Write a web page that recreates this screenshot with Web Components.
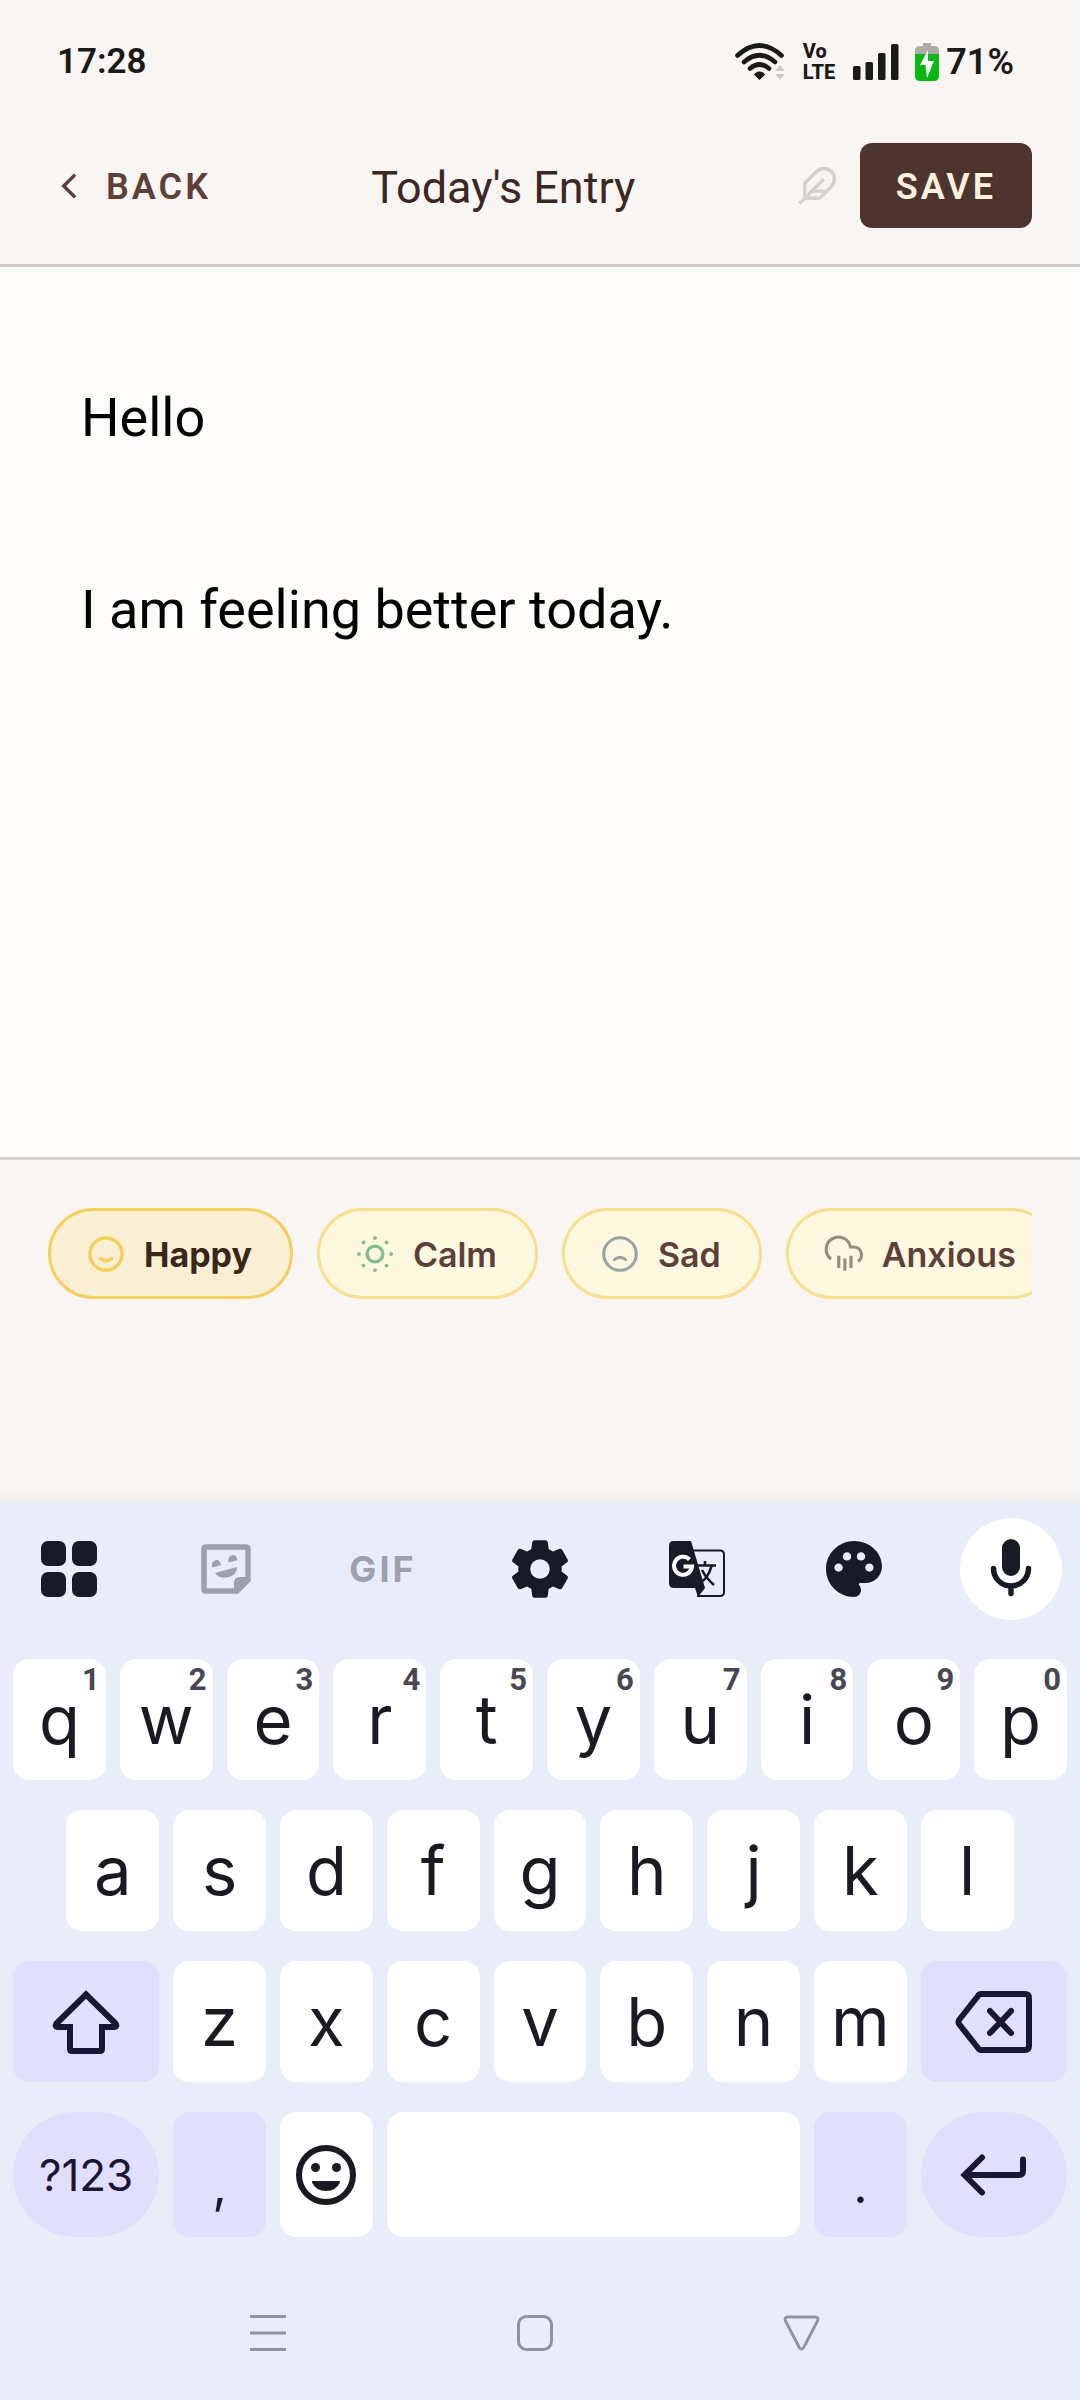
<!DOCTYPE html>
<html lang="en">
<head>
<meta charset="utf-8">
<meta name="viewport" content="width=device-width, initial-scale=1">
<title>Today's Entry</title>
<style>
    html, body {
        margin: 0;
        height: 100%;
    }
    body {
        font-family: Roboto, "Liberation Sans", sans-serif;
        --paper: #fdfcf8;
        --surface: #f9f5f2;
        --rule: #d7ccc8;
        --brown: #4e342e;
        --brown-light: #5d4037;
        --brown-dark: #3e2723;
        --board: #e9edf9;
        --key-alt: #e2dffc;
        --ink: #181a26;
    }
</style>
</head>
<body>
<journal-app></journal-app>

<template id="template-journal-app">
    <style>
        :host {
            display: flex;
            flex-direction: column;
            min-height: 100%;
            background: var(--surface);
        }
        entry-editor {
            flex: 1;
        }
    </style>
    <status-bar time="17:28" battery="71%"></status-bar>
    <entry-header>Today's Entry</entry-header>
    <entry-editor></entry-editor>
    <mood-bar>
        <mood-chip selected>
            <svg slot="icon" width="42" height="42" viewBox="0 0 24 24" fill="none" stroke="#f5cf5c" stroke-width="2" stroke-linecap="round">
                <circle cx="12" cy="12" r="9.2"/><path d="M8.8 14.6q3.2 2.4 6.4 0"/>
            </svg>
            Happy
        </mood-chip>
        <mood-chip>
            <svg slot="icon" width="42" height="42" viewBox="0 0 24 24" fill="#81c08a">
                <circle cx="12" cy="12" r="4.5" fill="none" stroke="#81c08a" stroke-width="1.9"/>
                <circle cx="12" cy="2.8" r="1.1"/><circle cx="12" cy="21.2" r="1.1"/>
                <circle cx="2.8" cy="12" r="1.1"/><circle cx="21.2" cy="12" r="1.1"/>
                <circle cx="5.4" cy="5.4" r="1.1"/><circle cx="18.6" cy="5.4" r="1.1"/>
                <circle cx="5.4" cy="18.6" r="1.1"/><circle cx="18.6" cy="18.6" r="1.1"/>
            </svg>
            Calm
        </mood-chip>
        <mood-chip>
            <svg slot="icon" width="42" height="42" viewBox="0 0 24 24" fill="none" stroke="#95a5a8" stroke-width="1.8" stroke-linecap="round">
                <circle cx="12" cy="12" r="9.3"/><path d="M8.8 15.2q3.2-2.6 6.4 0"/>
            </svg>
            Sad
        </mood-chip>
        <mood-chip>
            <svg slot="icon" width="42" height="42" viewBox="0 0 24 24" fill="none" stroke="#9b8b7c" stroke-width="1.8">
                <path d="M4.6 14.9A7 7 0 1 1 15.71 8h1.79a4.5 4.5 0 0 1 2.5 8.24M9 13v7M12.5 14.6v7M16 13v7"/>
            </svg>
            Anxious
        </mood-chip>
    </mood-bar>
    <soft-keyboard></soft-keyboard>
    <nav-bar></nav-bar>
</template>

<template id="template-status-bar">
    <style>
        :host {
            display: flex;
            justify-content: space-between;
            align-items: center;
            height: 91px;
            padding: 16px 66px 0 57px;
            font-size: 35px;
            font-weight: 600;
            color: #1a1a18;
        }
        .icons {
            display: flex;
            align-items: center;
        }
        .volte {
            display: grid;
            margin: 0 18px;
            font-size: 20px;
            font-weight: 800;
            line-height: 21px;
        }
        .battery {
            margin: 0 7px 0 16px;
        }
        .level {
            font-size: 36px;
        }
    </style>
    <span class="time"></span>
    <div class="icons">
        <svg width="50" height="38" viewBox="0 0 50 38" fill="none" stroke="#1a1a18" stroke-width="4.6" stroke-linecap="round">
            <path d="M2.5 12.5Q24.5-7.500 46.500 12.500M9 19q15.500-13.500 31 0M15 25.500q9.500-8 19 0"/>
            <path d="M24.500 28.500c3 0 5 2 5.500 3.300L24.500 37 19 31.800c.5-1.300 2.500-3.300 5.500-3.300z" fill="#1a1a18" stroke="none"/>
            <path d="M45 22l5 6H40zM45 37l5-6H40z" fill="#cfccc8" stroke="none"/>
        </svg>
        <span class="volte"><span>Vo</span><span>LTE</span></span>
        <svg width="46" height="38" viewBox="0 0 46 38" fill="#1a1a18">
            <rect x="0" y="23" width="7.500" height="14" rx="1.500"/>
            <rect x="12.500" y="19" width="7.500" height="18" rx="1.500"/>
            <rect x="25" y="10" width="7.500" height="27" rx="1.500"/>
            <rect x="38" y="1" width="7.500" height="36" rx="1.500"/>
        </svg>
        <svg class="battery" width="24" height="38" viewBox="0 0 24 38">
            <path d="M8 0h8v3h3q5 0 5 5v4H0V8q0-5 5-5h3z" fill="#adaba8"/>
            <path d="M0 11h24v22q0 5-5 5H5q-5 0-5-5z" fill="#0ab814"/>
            <path d="M13 7L5 22h5.500L12 35l7-17h-6z" fill="#fff"/>
        </svg>
        <span class="level"></span>
    </div>
</template>

<template id="template-entry-header">
    <style>
        :host {
            display: flex;
            justify-content: space-between;
            align-items: center;
            padding: 36px 48px;
            border-bottom: 3px solid var(--rule);
        }
        button {
            font: 600 36px/43px Roboto, "Liberation Sans", sans-serif;
            letter-spacing: 3px;
            border: 0;
        }
        .back {
            display: flex;
            align-items: center;
            gap: 16px;
            padding: 0;
            background: none;
            color: var(--brown-light);
        }
        .back span, h1 {
            padding-top: 4px;
        }
        h1 {
            margin: 0;
            font-size: 45px;
            line-height: 54px;
            font-weight: 400;
            color: var(--brown-dark);
        }
        .actions {
            display: flex;
            align-items: center;
            gap: 22px;
        }
        .save {
            padding: 23px 36px 19px;
            border-radius: 12px;
            background: var(--brown);
            color: #fff3e0;
        }
    </style>
    <button class="back">
        <svg width="42" height="42" viewBox="0 0 24 24" fill="none" stroke="currentColor" stroke-width="2"><path d="M15.500 5.500 9 12l6.500 6.500"/></svg>
        <span>BACK</span>
    </button>
    <h1><slot></slot></h1>
    <div class="actions">
        <svg width="42" height="42" viewBox="0 0 24 24" fill="none" stroke="#d7d0cb" stroke-width="2">
            <path d="M12.670 19a2 2 0 0 0 1.416-.588l6.154-6.172a6 6 0 0 0-8.490-8.490L5.586 9.914A2 2 0 0 0 5 11.328V19zM16 8 2 22M17.500 15H9"/>
        </svg>
        <button class="save">SAVE</button>
    </div>
</template>

<template id="template-entry-editor">
    <style>
        :host {
            display: flex;
            background: var(--paper);
            border-bottom: 3px solid #d6d1cd;
        }
        textarea {
            flex: 1;
            box-sizing: border-box;
            padding: 103px 81px;
            border: 0;
            outline: 0;
            resize: none;
            background: none;
            color: #000;
            font: 400 54px/96px Roboto, "Liberation Sans", sans-serif;
        }
    </style>
    <textarea aria-label="Journal entry" spellcheck="false">Hello

I am feeling better today.</textarea>
</template>

<template id="template-mood-bar">
    <style>
        :host {
            display: block;
            padding: 48px 48px 203px;
            background: linear-gradient(transparent 97%, #eeece8);
        }
        .track {
            display: flex;
            gap: 24px;
            overflow: hidden;
        }
    </style>
    <div class="track"><slot></slot></div>
</template>

<template id="template-mood-chip">
    <style>
        :host {
            display: block;
            flex: none;
        }
        button {
            display: flex;
            align-items: center;
            gap: 17px;
            padding: 21px 38px 21px 34px;
            border: 3px solid #f5e08e;
            border-radius: 48px;
            background: #fef8e1;
            color: var(--brown-light);
            font: 600 34px/40px Inter, "Liberation Sans", sans-serif;
        }
        span {
            padding-top: 3px;
        }
        :host([selected]) button {
            border-color: #f5d060;
            background: #f9efd3;
            color: #3a271b;
            font-weight: 700;
        }
    </style>
    <button><slot name="icon"></slot><span><slot></slot></span></button>
</template>

<template id="template-soft-keyboard">
    <style>
        :host {
            display: block;
            background: var(--board);
        }
        .tools {
            display: flex;
            justify-content: space-between;
            padding: 16px 18px 39px;
        }
        .tools button {
            display: flex;
            align-items: center;
            justify-content: center;
            width: 102px;
            height: 102px;
            padding: 0;
            border: 0;
            border-radius: 50%;
            background: none;
            color: var(--ink);
            font: 700 36px Inter, sans-serif;
        }
        .tools .muted {
            color: #9ea0ae;
            letter-spacing: 3px;
        }
        .tools .mic {
            background: #fff;
        }
        svg {
            overflow: visible;
        }
        .keys {
            display: grid;
            grid-template-columns: repeat(20, 1fr);
            gap: 30px 14px;
            padding: 0 13px;
        }
        key-cap {
            grid-column-end: span 2;
        }
        .indent {
            grid-column: 2 / span 2;
        }
        .row3 {
            grid-column-start: 1;
        }
        .wide {
            grid-column-end: span 3;
        }
        .space {
            grid-column-end: span 8;
        }
    </style>
    <div class="tools">
        <button aria-label="Apps"><svg width="56" height="56" viewBox="0 0 56 56" fill="currentColor">
            <rect width="25" height="25" rx="7"/><rect x="31" width="25" height="25" rx="7"/>
            <rect y="31" width="25" height="25" rx="7"/><rect x="31" y="31" width="25" height="25" rx="7"/>
        </svg></button>
        <button class="muted" aria-label="Stickers"><svg width="56" height="56" viewBox="0 0 56 56" fill="currentColor">
            <path d="M8 6H48Q50 6 50 8V39L39 50H8Q6 50 6 48V8Q6 6 8 6z" fill="none" stroke="currentColor" stroke-width="5.500"/>
            <path d="M36 51V42q0-6 6-6h10v4L40 52zM17 32l22-6q0 8-9 10.300Q21 38 17 32zM14 26.500q-1-6 3.300-7.300 4.700-1 5.700 5zM30.500 21.500q-1-6 3.300-7.300 4.700-1 5.700 5z"/>
        </svg></button>
        <button class="muted">GIF</button>
        <button aria-label="Settings"><svg width="56" height="56" viewBox="2.400 2.400 19.200 19.200" fill="currentColor" stroke="currentColor" stroke-width=".5" stroke-linejoin="round">
            <path d="M19.140 12.940c.04-.3.06-.61.06-.94 0-.32-.02-.64-.07-.94l2.030-1.580c.18-.14.23-.41.12-.61l-1.920-3.320c-.12-.22-.37-.29-.59-.22l-2.390.96c-.5-.38-1.030-.7-1.620-.94l-.36-2.540c-.04-.24-.24-.41-.48-.41h-3.840c-.24 0-.43.17-.47.41l-.36 2.540c-.59.24-1.130.57-1.620.94l-2.390-.96c-.22-.08-.47 0-.59.22L2.740 8.870c-.12.21-.08.47.12.61l2.030 1.580c-.05.3-.09.63-.09.94s.02.64.07.94l-2.030 1.580c-.18.14-.23.41-.12.61l1.920 3.320c.12.22.37.29.59.22l2.390-.96c.5.38 1.030.7 1.620.94l.36 2.540c.05.24.24.41.48.41h3.840c.24 0 .44-.17.47-.41l.36-2.540c.59-.24 1.130-.56 1.620-.94l2.390.96c.22.08.47 0 .59-.22l1.920-3.320c.12-.22.07-.47-.12-.61l-2.010-1.580zM12 15.600c-1.980 0-3.600-1.620-3.600-3.600s1.620-3.600 3.600-3.600 3.600 1.620 3.600 3.600-1.620 3.600-3.600 3.600z"/>
        </svg></button>
        <button aria-label="Translate"><svg width="56" height="56" viewBox="0 0 56 56" fill="none" stroke="currentColor" stroke-width="2">
            <path d="M24 9.500H51q4 0 4 4V51q0 4-4 4H28"/>
            <path d="M5 0H22L36 47 29 56 26 47H5Q0 47 0 42V5Q0 0 5 0z" fill="currentColor" stroke="none"/>
            <path d="M20.500 18.500A9 9 0 1 0 23 25.500H14.500" stroke="#fff" stroke-width="4"/>
            <path d="M36 20v4M28 24.500H47M42.500 25q-3 11-10 16M33 29q4 8 12 15" stroke-width="2.600"/>
        </svg></button>
        <button aria-label="Themes"><svg width="56" height="56" viewBox="2 2 20 20" fill="currentColor">
            <path d="M12 2C6.490 2 2 6.490 2 12s4.490 10 10 10c1.380 0 2.500-1.120 2.500-2.500 0-.61-.23-1.200-.64-1.670-.08-.1-.13-.21-.13-.33 0-.28.22-.5.5-.5H16c3.310 0 6-2.690 6-6 0-4.960-4.490-9-10-9zm5.500 11c-.83 0-1.500-.67-1.500-1.500s.67-1.500 1.500-1.500 1.500.67 1.500 1.500-.67 1.500-1.500 1.500zm-3-4c-.83 0-1.500-.67-1.500-1.500S13.670 6 14.500 6s1.500.67 1.500 1.500S15.330 9 14.500 9zM5 11.500c0-.83.67-1.500 1.500-1.500s1.500.67 1.500 1.500S7.330 13 6.500 13 5 12.330 5 11.500zm6-4c0 .83-.67 1.500-1.500 1.500S8 8.330 8 7.500 8.670 6 9.500 6s1.500.67 1.500 1.500z"/>
        </svg></button>
        <button class="mic" aria-label="Voice input"><svg width="56" height="56" viewBox="0 0 56 56" fill="none" stroke="currentColor" stroke-width="5.500" stroke-linecap="round">
            <rect x="19" y="-2" width="18" height="37" rx="9" fill="currentColor" stroke="none"/>
            <path d="M10.500 27.500a17.500 17.500 0 0 0 35 0M28 45v7.500"/>
        </svg></button>
    </div>
    <div class="keys">
        <key-cap hint="1">q</key-cap><key-cap hint="2">w</key-cap><key-cap hint="3">e</key-cap><key-cap hint="4">r</key-cap><key-cap hint="5">t</key-cap><key-cap hint="6">y</key-cap><key-cap hint="7">u</key-cap><key-cap hint="8">i</key-cap><key-cap hint="9">o</key-cap><key-cap hint="0">p</key-cap>
        <key-cap class="indent">a</key-cap><key-cap>s</key-cap><key-cap>d</key-cap><key-cap>f</key-cap><key-cap>g</key-cap><key-cap>h</key-cap><key-cap>j</key-cap><key-cap>k</key-cap><key-cap>l</key-cap>
        <key-cap class="wide row3" kind="alt" label="Shift"><svg width="68" height="64" viewBox="0 0 68 64" fill="none" stroke="currentColor" stroke-width="6">
            <path d="M34 4.500 63.500 33.500q2 3-1 3.500H50V59q0 2-2 2H20q-2 0-2-2V37H5.500q-3-.5-1-3.500z"/>
        </svg></key-cap>
        <key-cap>z</key-cap><key-cap>x</key-cap><key-cap>c</key-cap><key-cap>v</key-cap><key-cap>b</key-cap><key-cap>n</key-cap><key-cap>m</key-cap>
        <key-cap class="wide" kind="alt" label="Backspace"><svg width="77" height="62" viewBox="0 0 77 62" fill="none" stroke="currentColor" stroke-width="6" stroke-linecap="round">
            <path d="M26 3H70q4 0 4 4V55q0 4-4 4H26q-2 0-3-2L4 33q-1-2 0-4L23 5q1-2 3-2zM35 20 56 42M56 20 35 42"/>
        </svg></key-cap>
        <key-cap class="wide" kind="alt" shape="round">?123</key-cap>
        <key-cap kind="alt" shape="mark">,</key-cap>
        <key-cap shape="tall" label="Emoji"><svg width="60" height="60" viewBox="0 0 60 60" fill="currentColor">
            <circle cx="30" cy="30" r="27" fill="none" stroke="currentColor" stroke-width="6"/>
            <circle cx="19.500" cy="22.500" r="4.500"/><circle cx="40.500" cy="22.500" r="4.500"/>
            <path d="M17 36H43q1.500 0 1 1.500Q40 46 30 46T16 37.500Q15.500 36 17 36z"/>
        </svg></key-cap>
        <key-cap class="space" shape="tall" label="Space"></key-cap>
        <key-cap kind="alt" shape="mark">.</key-cap>
        <key-cap class="wide" kind="alt" shape="round" label="Enter"><svg width="65" height="42" viewBox="0 0 65 42" fill="none" stroke="currentColor" stroke-width="6" stroke-linecap="round">
            <path d="M21 3.500 3.500 21 21 38.500M4 21H58q4 0 4-4V5.500"/>
        </svg></key-cap>
    </div>
</template>

<template id="template-key-cap">
    <style>
        :host {
            display: block;
        }
        button {
            position: relative;
            display: flex;
            align-items: center;
            justify-content: center;
            width: 100%;
            height: 121px;
            padding: 0;
            border: 0;
            border-radius: 16px;
            background: #fff;
            color: #1a1b22;
            font: 400 67px Inter, sans-serif;
        }
        .hint {
            position: absolute;
            top: 3px;
            right: 6px;
            font: 700 31px/36px Roboto, sans-serif;
            color: #474851;
        }
        :host([kind="alt"]) button {
            background: var(--key-alt);
            color: #191637;
        }
        :host([shape]) button {
            height: 125px;
        }
        :host([shape="round"]) button {
            border-radius: 63px;
            font-size: 44px;
        }
        :host([shape="mark"]) button {
            padding-top: 20px;
            font-size: 50px;
        }
    </style>
    <button><slot></slot><span class="hint"></span></button>
</template>

<template id="template-nav-bar">
    <style>
        :host {
            display: flex;
            padding: 75px 145px 46px 135px;
            background: var(--board);
        }
        button {
            flex: 1;
            display: flex;
            justify-content: center;
            padding: 0;
            border: 0;
            background: none;
            color: #9193a0;
        }
    </style>
    <button aria-label="Recent apps"><svg width="42" height="42" viewBox="0 0 42 42" fill="none" stroke="currentColor" stroke-width="3"><path d="M3 4.500H39M3 21H39M3 37.500H39"/></svg></button>
    <button aria-label="Home"><svg width="42" height="42" viewBox="0 0 42 42" fill="none" stroke="currentColor" stroke-width="3"><rect x="4.500" y="4.500" width="33" height="33" rx="8"/></svg></button>
    <button aria-label="Hide keyboard"><svg width="42" height="42" viewBox="0 0 42 42" fill="none" stroke="currentColor" stroke-width="3"><path d="M7 5H34q4 0 2.500 4L23 35q-2.500 4-5 0L4.500 9Q3 5 7 5z"/></svg></button>
</template>

<script>
    class TemplateElement extends HTMLElement {
        constructor() {
            super()
            const template = document.querySelector('#template-' + this.localName).content
            this.attachShadow({ mode: 'open' }).appendChild(template.cloneNode(true))
        }
    }

    class StatusBar extends TemplateElement {
        connectedCallback() {
            this.shadowRoot.querySelector('.time').textContent = this.getAttribute('time')
            this.shadowRoot.querySelector('.level').textContent = this.getAttribute('battery')
        }
    }

    class MoodChip extends TemplateElement {
        connectedCallback() {
            const button = this.shadowRoot.querySelector('button')
            button.setAttribute('aria-pressed', this.hasAttribute('selected'))
            button.addEventListener('click', () => {
                const on = this.toggleAttribute('selected')
                button.setAttribute('aria-pressed', on)
            })
        }
    }

    class KeyCap extends TemplateElement {
        connectedCallback() {
            const hint = this.shadowRoot.querySelector('.hint')
            if (this.hasAttribute('hint')) {
                hint.textContent = this.getAttribute('hint')
            } else {
                hint.remove()
            }
            if (this.hasAttribute('label')) {
                this.shadowRoot.querySelector('button').setAttribute('aria-label', this.getAttribute('label'))
            }
        }
    }

    customElements.define('status-bar', StatusBar)
    customElements.define('entry-header', class extends TemplateElement {})
    customElements.define('entry-editor', class extends TemplateElement {})
    customElements.define('mood-chip', MoodChip)
    customElements.define('mood-bar', class extends TemplateElement {})
    customElements.define('key-cap', KeyCap)
    customElements.define('soft-keyboard', class extends TemplateElement {})
    customElements.define('nav-bar', class extends TemplateElement {})
    customElements.define('journal-app', class extends TemplateElement {})
</script>
</body>
</html>
